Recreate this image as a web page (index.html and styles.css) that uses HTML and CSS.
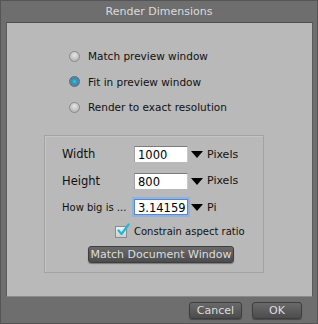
FILE: index.html
```html
<!DOCTYPE html>
<html>
<head>
    <title>Render Dimensions</title>
    <meta charset="UTF-8">
    <link rel="stylesheet" href="styles.css">
</head>
<body>
    <div class="dialog">
        <div class="titlebar">Render Dimensions</div>

        <div class="panel">
            <div class="radios">
                <label class="radio-row"><span class="radio"></span>Match preview window</label>
                <label class="radio-row"><span class="radio checked"></span>Fit in preview window</label>
                <label class="radio-row"><span class="radio"></span>Render to exact resolution</label>
            </div>

            <div class="group">
                <div class="field-row">
                    <span class="field-label">Width</span>
                    <span class="field-input">1000</span>
                    <span class="arrow"></span>
                    <span class="unit">Pixels</span>
                </div>
                <div class="field-row">
                    <span class="field-label">Height</span>
                    <span class="field-input">800</span>
                    <span class="arrow"></span>
                    <span class="unit">Pixels</span>
                </div>
                <div class="field-row">
                    <span class="field-label small">How big is ...</span>
                    <span class="field-input focused">3.14159</span>
                    <span class="arrow"></span>
                    <span class="unit">Pi</span>
                </div>
                <label class="check-row">
                    <span class="checkbox">
                        <svg width="14" height="14" viewBox="0 0 14 14">
                            <path d="M2.5 7.5 L5.5 11 L12.5 1.5" fill="none" stroke="#1fb8d6" stroke-width="2.2" stroke-linecap="round" stroke-linejoin="round"/>
                        </svg>
                    </span>
                    Constrain aspect ratio
                </label>
                <div class="doc-row">
                    <button class="dark-btn wide">Match Document Window</button>
                </div>
            </div>
        </div>

        <div class="footer">
            <button class="dark-btn cancel">Cancel</button>
            <button class="dark-btn ok">OK</button>
        </div>
    </div>
</body>
</html>
```

FILE: styles.css
```css
body {
    margin: 0;
    background: #6b6b6b;
    font-family: "DejaVu Sans", Verdana, sans-serif;
}
.dialog {
    width: 318px;
    height: 324px;
    box-sizing: border-box;
    background: #6e6e6e;
    border: 1px solid #555;
    display: flex;
    flex-direction: column;
}
.titlebar {
    height: 21px;
    line-height: 21px;
    text-align: center;
    color: #dcdcdc;
    font-size: 11px;
}
.panel {
    flex: 1;
    margin: 0 4px 0 5px;
    background: #b9b9b9;
    border-top: 1px solid #4e4e4e;
    border-left: 1px solid #5c5c5c;
    border-right: 1px solid #5c5c5c;
    border-bottom: 1px solid #8a8a8a;
    padding-top: 25px;
}
.radios {
    padding-left: 62px;
    display: flex;
    flex-direction: column;
    gap: 9.5px;
}
.radio-row {
    display: flex;
    align-items: center;
    height: 16px;
    font-size: 10.5px;
    color: #111;
}
.radio {
    width: 9px;
    height: 9px;
    border-radius: 50%;
    border: 1px solid #8a8a8a;
    background: radial-gradient(circle at 50% 35%, #e6e6e6, #a8a8a8);
    margin-right: 8px;
}
.radio.checked {
    border-color: #4a6f85;
    background: radial-gradient(circle at 50% 50%, #3ec6ea 0, #2a9ac4 35%, #5d7f8f 60%, #8fa3ab 100%);
}
.group {
    margin: 20px 0 0 37px;
    width: 218px;
    height: 126px;
    border: 1px solid #a3a3a3;
    box-shadow: inset 1px 1px 0 #c4c4c4;
    padding-top: 10px;
    box-sizing: content-box;
}
.field-row {
    display: flex;
    align-items: center;
    height: 16px;
    margin-bottom: 10.5px;
    padding-left: 17px;
}
.field-label {
    width: 72px;
    font-size: 11.5px;
    color: #111;
}
.field-label.small {
    font-size: 10px;
}
.field-input {
    height: 16px;
    line-height: 17px;
    box-sizing: border-box;
    background: #fff;
    border-top: 1px solid #7c7c7c;
    border-left: 1px solid #a0a0a0;
    border-right: 1px solid #c8c8c8;
    padding-left: 3px;
    font-size: 11.5px;
    color: #000;
    width: 54px;
}
.field-input.focused {
    border: 1px solid #5a86c5;
    box-shadow: 0 0 0 2px #8fb2e0;
}
.arrow {
    width: 0;
    height: 0;
    border-left: 6px solid transparent;
    border-right: 6px solid transparent;
    border-top: 7px solid #000;
    margin: 1px 4px 0 3px;
}
.unit {
    font-size: 11px;
    color: #111;
}
.check-row {
    display: flex;
    align-items: center;
    padding-left: 70px;
    margin-top: -2px;
    height: 16px;
    font-size: 10px;
    color: #111;
}
.checkbox {
    position: relative;
    width: 10px;
    height: 10px;
    border: 1px solid #8c8c8c;
    background: linear-gradient(#f2f2f2, #cfcfcf);
    margin-right: 7px;
}
.checkbox svg {
    position: absolute;
    left: 0;
    top: -4px;
}
.doc-row {
    padding-left: 43px;
    margin-top: 3px;
}
.dark-btn {
    height: 17px;
    padding: 0;
    border: 1px solid #3e3e3e;
    border-radius: 3px;
    background: linear-gradient(#6a6a6a, #4c4c4c);
    box-shadow: 0 1px 1px rgba(0, 0, 0, 0.35);
    color: #dedede;
    font-family: "DejaVu Sans", Verdana, sans-serif;
    font-size: 11px;
    cursor: pointer;
}
.dark-btn.wide {
    width: 146px;
}
.footer {
    height: 26px;
    display: flex;
    justify-content: flex-end;
    align-items: center;
    gap: 10px;
    padding-right: 15px;
}
.cancel {
    width: 53px;
}
.ok {
    width: 50px;
}
```
